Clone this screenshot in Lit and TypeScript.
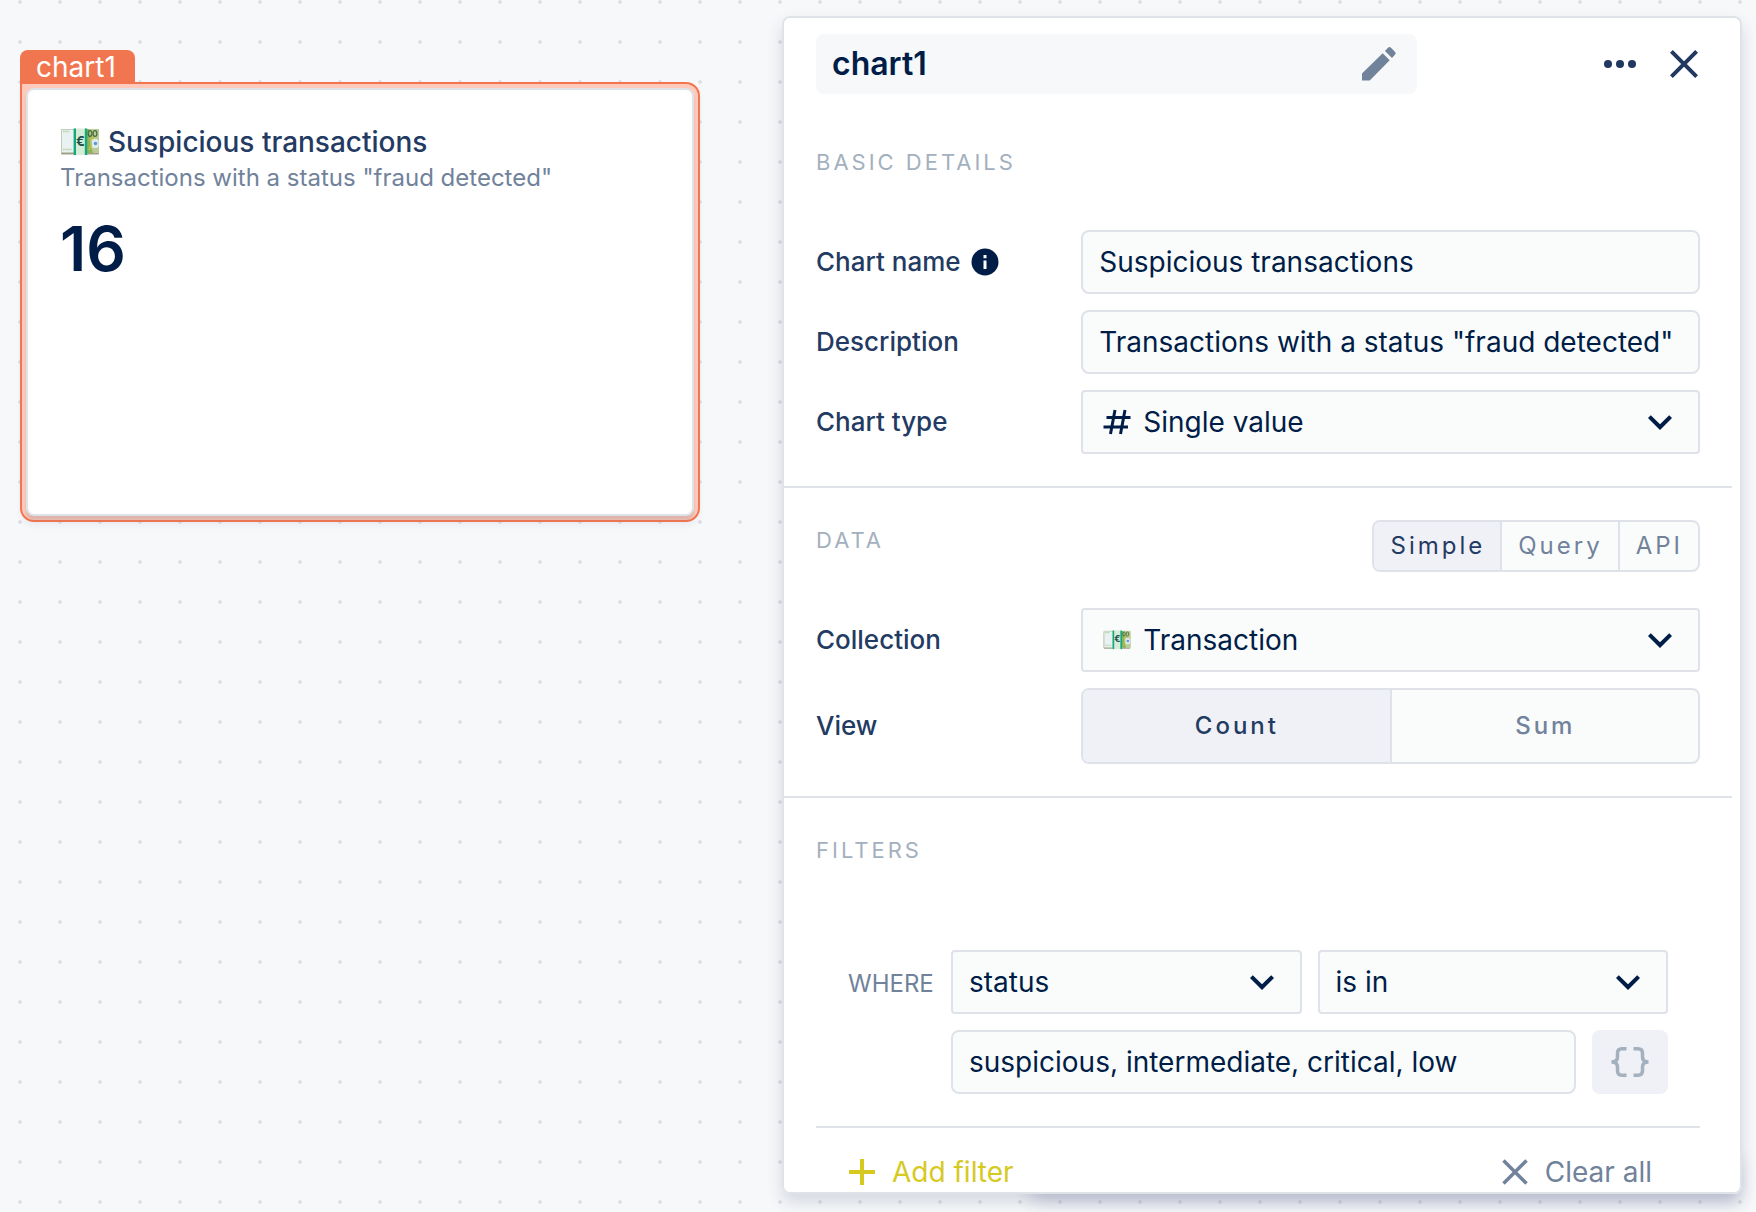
import { LitElement, html, css, svg, nothing, type TemplateResult } from "lit";
import { customElement, property, state } from "lit/decorators.js";
import { classMap } from "lit/directives/class-map.js";

const chevron = html`<svg class="chevron" viewBox="0 0 24 24" aria-hidden="true">
  <path fill="currentColor" d="M16.59 8.59 12 13.17 7.41 8.59 6 10l6 6 6-6z" />
</svg>`;

const banknote = html`<svg class="banknote" viewBox="0 0 40 28" aria-hidden="true">
  <rect x="1" y="3" width="38" height="23.5" rx="1" fill="#a39f8c" />
  <rect x="1" y="1" width="38" height="24" fill="#c6d3aa" />
  <rect x="1.6" y="1.4" width="13" height="23" fill="#eaf1f2" stroke="#bcc8b8" stroke-width="0.8" />
  <path d="M3 3.500h6M3 21.500h9" stroke="#b4d3a4" stroke-width="1.6" stroke-dasharray="1.6 0.6" />
  <path d="M27 1h12v24H27z" fill="#b9cc98" />
  <path d="M27 1h2l2 8-1 7 3 9h-6z" fill="#8fb158" />
  <path d="M29 12l4-3 1 4-3 4-2 5" fill="none" stroke="#c2bd45" stroke-width="1.6" />
  <rect x="32" y="11" width="6.500" height="9" rx="2" fill="#dfebec" />
  <circle cx="35.5" cy="15.5" r="1.800" fill="#5b97dc" />
  <ellipse cx="30" cy="5.500" rx="1.900" ry="2.900" fill="none" stroke="#456b3a" stroke-width="1.200" />
  <ellipse cx="35" cy="5.500" rx="1.900" ry="2.900" fill="none" stroke="#456b3a" stroke-width="1.200" />
  <rect x="14" y="0.500" width="13" height="26.500" fill="#d5ecd9" />
  <rect x="13.600" y="0.500" width="2.400" height="26.500" fill="#12a97c" />
  <rect x="24.800" y="0.500" width="2.400" height="26.500" fill="#12a97c" />
  <text x="20.400" y="17.500" text-anchor="middle" font-family="Inter, sans-serif" font-size="13" font-weight="700" fill="#1c4f48">€</text>
</svg>`;

const hashMark = html`<svg class="hash" viewBox="0 0 28 26" aria-hidden="true">
  <path d="M12 1 7.5 25M22 1l-4.500 24M3.500 8.500H27.500M.500 18H25" fill="none" stroke="currentColor" stroke-width="3" />
</svg>`;

const controls = css`
  * {
    box-sizing: border-box;
  }
  button,
  input,
  select {
    margin: 0;
    font: inherit;
    color: inherit;
  }
  button {
    padding: 0;
    border: 0;
    background: none;
    cursor: pointer;
  }
  svg {
    display: block;
    flex: none;
  }
  .control {
    width: 100%;
    min-width: 0;
    height: 64px;
    padding: 0 16px;
    border: 2px solid #dfe2e8;
    border-radius: 8px;
    background: #fafcfb;
    color: #001d47;
    font-size: 28px;
    line-height: 40px;
  }
`;

/** Drop-down with a chevron and an optional leading icon. */
@customElement("select-box")
export class SelectBox extends LitElement {
  static styles = [
    controls,
    css`
      :host {
        display: grid;
        align-items: center;
        min-width: 0;
        color: #001d47;
      }
      .control,
      .chevron,
      .lead {
        grid-area: 1 / 1;
      }
      .control {
        appearance: none;
        border-radius: 4px;
      }
      .control.with-icon {
        padding-left: 60px;
      }
      .chevron {
        width: 48px;
        height: 48px;
        margin-right: 16px;
        justify-self: end;
        pointer-events: none;
      }
      .lead {
        width: 28px;
        margin-left: 22px;
        pointer-events: none;
      }
      .hash {
        width: 28px;
        height: 26px;
      }
      .banknote {
        width: 28px;
        height: 20px;
      }
    `,
  ];

  @property() label = "";
  @property({ attribute: false }) options: string[] = [];
  @property({ attribute: false }) icon?: TemplateResult;

  render() {
    return html`
      <select class=${classMap({ control: true, "with-icon": !!this.icon })} aria-label=${this.label}>
        ${this.options.map((o) => html`<option>${o}</option>`)}
      </select>
      ${this.icon ? html`<span class="lead">${this.icon}</span>` : nothing} ${chevron}
    `;
  }
}

/** Row of mutually exclusive buttons. */
@customElement("segmented-control")
export class SegmentedControl extends LitElement {
  static styles = [
    controls,
    css`
      :host {
        display: block;
        min-width: 0;
      }
      .group {
        display: flex;
        overflow: hidden;
        border: 2px solid #dfe2e8;
        border-radius: 8px;
        background: #fafcfb;
      }
      .option {
        height: 48px;
        padding: 0 15px 0 16px;
        color: #71829b;
        font-size: 24px;
        line-height: 32px;
        letter-spacing: 3px;
      }
      .option + .option {
        border-left: 2px solid #dfe2e8;
      }
      .option.active {
        background: #f0f1f6;
        color: #233b62;
      }
      .wide .option {
        flex: 1 1 0;
        height: 72px;
        font-weight: 500;
      }
    `,
  ];

  @property() label = "";
  @property({ type: Boolean }) wide = false;
  @property({ attribute: false }) options: string[] = [];
  @state() private selected = 0;

  render() {
    return html`<div class=${classMap({ group: true, wide: this.wide })} role="group" aria-label=${this.label}>
      ${this.options.map(
        (o, i) => html`<button
          type="button"
          class=${classMap({ option: true, active: i === this.selected })}
          aria-pressed=${i === this.selected ? "true" : "false"}
          @click=${() => (this.selected = i)}
        >${o}</button>`,
      )}
    </div>`;
  }
}

/** Selected chart block on the canvas. */
@customElement("chart-card")
export class ChartCard extends LitElement {
  static styles = css`
    :host {
      display: flex;
      flex-direction: column;
      align-items: flex-start;
    }
    .tab {
      padding: 2px 19px 0 16px;
      border-radius: 8px 8px 0 0;
      background: #f1754f;
      color: #fff;
      font-size: 28px;
      line-height: 30px;
    }
    .frame {
      box-sizing: border-box;
      display: flex;
      width: 100%;
      min-height: 440px;
      padding: 4px;
      border: 2px solid #f1754f;
      border-radius: 0 14px 14px 14px;
      background: #fecabb;
      box-shadow: 0 4px 6px rgba(20, 30, 60, 0.05);
    }
    .body {
      flex: 1;
      padding: 32px;
      border: 2px solid #dfe3e8;
      border-radius: 8px;
      background: #fff;
      box-shadow: 0 4px 3px rgba(120, 110, 120, 0.24);
    }
    .title {
      display: flex;
      align-items: center;
      gap: 8px;
      margin: 0;
      color: #233b62;
      font-size: 28px;
      line-height: 40px;
      font-weight: 500;
    }
    .banknote {
      width: 40px;
      height: 28px;
    }
    .subtitle {
      margin: 0;
      color: #71829b;
      font-size: 24px;
      line-height: 32px;
    }
    .value {
      margin: 20px 0 0;
      color: #001d47;
      font-size: 62px;
      line-height: 70px;
      font-weight: 600;
    }
  `;

  render() {
    return html`
      <div class="tab">chart1</div>
      <div class="frame">
        <article class="body">
          <h2 class="title">${banknote}<span>Suspicious transactions</span></h2>
          <p class="subtitle">Transactions with a status "fraud detected"</p>
          <p class="value">16</p>
        </article>
      </div>
    `;
  }
}

/** Settings of the selected chart. */
@customElement("settings-panel")
export class SettingsPanel extends LitElement {
  static styles = [
    controls,
    css`
      :host {
        position: relative;
        display: flex;
        min-width: 0;
        min-height: 0;
        isolation: isolate;
        border-radius: 8px;
        box-shadow: 0 8px 16px rgba(30, 50, 90, 0.16);
      }
      /* deeper shadow cast below the right part of the panel */
      :host::after {
        content: "";
        position: absolute;
        z-index: -1;
        left: 26%;
        right: 4px;
        bottom: 0;
        height: 40px;
        box-shadow: 0 6px 18px rgba(60, 60, 120, 0.24);
      }
      .scroller {
        flex: 1;
        min-width: 0;
        padding-right: 8px;
        overflow-y: auto;
        scrollbar-width: none;
        border: 2px solid #dfe3e8;
        border-radius: 8px;
        background: #fff;
      }
      .header {
        display: flex;
        align-items: center;
        padding: 16px 32px;
        color: #213860;
      }
      .name {
        display: flex;
        align-items: center;
        flex: 0 0 68%;
        height: 60px;
        padding: 0 20px 0 16px;
        border-radius: 8px;
        background: #f7f8fa;
      }
      .name-input {
        flex: 1;
        min-width: 0;
        padding: 0;
        border: 0;
        background: none;
        color: #001d47;
        font-size: 32px;
        line-height: 40px;
        font-weight: 600;
      }
      .pencil {
        width: 36px;
        height: 36px;
        color: #71829b;
      }
      .more {
        width: 32px;
        height: 32px;
        margin-left: auto;
      }
      .close {
        width: 32px;
        height: 32px;
        margin-left: 32px;
      }
      .section {
        padding: 32px;
        border-bottom: 2px solid #dfe2e8;
      }
      .section.last {
        border-bottom: 0;
      }
      .section-head {
        display: flex;
        align-items: flex-start;
        justify-content: space-between;
        height: 52px;
        margin-bottom: 36px;
      }
      .section-title {
        margin: 0;
        color: #a3b0be;
        font-size: 22px;
        line-height: 40px;
        font-weight: 400;
        letter-spacing: 3px;
      }
      .rows {
        display: grid;
        grid-template-columns: 3fr 7fr;
        align-items: center;
        row-gap: 16px;
      }
      .label {
        display: flex;
        align-items: center;
        gap: 10px;
        color: #233b62;
        font-size: 26px;
        line-height: 32px;
        font-weight: 500;
      }
      .info {
        width: 28px;
        height: 28px;
      }
      .filter {
        display: grid;
        grid-template-columns: 103px minmax(0, 1fr);
        align-items: center;
        row-gap: 16px;
        padding: 32px;
        border-bottom: 2px solid #dfe3e8;
      }
      .where {
        padding-top: 4px;
        color: #71829b;
        font-size: 24px;
        line-height: 32px;
      }
      .pair {
        display: grid;
        grid-template-columns: 1fr 1fr;
        gap: 16px;
      }
      .value-row {
        grid-column: 2;
        display: flex;
        gap: 16px;
      }
      .braces {
        display: flex;
        align-items: center;
        justify-content: center;
        flex: 0 0 76px;
        height: 64px;
        border-radius: 8px;
        background: #f0f1f6;
        color: #a3b0be;
      }
      .braces-icon {
        width: 40px;
        height: 32px;
      }
      .actions {
        display: flex;
        justify-content: space-between;
        padding: 24px 48px 0 32px;
      }
      .action {
        display: flex;
        align-items: center;
        gap: 16px;
        color: #71829b;
        font-size: 28px;
        line-height: 40px;
      }
      .action.add {
        color: #d6c91f;
      }
      .action-icon {
        width: 28px;
        height: 28px;
      }
    `,
  ];

  render() {
    return html`
      <div class="scroller">
        <header class="header">
          <div class="name">
            <input class="name-input" aria-label="Block name" .value=${"chart1"} />
            <button type="button" aria-label="Rename">
              <svg class="pencil" viewBox="0 0 36 36" aria-hidden="true">
                <path
                  fill="currentColor"
                  d="M1 27.500 21.700 7.200l7 7L8.700 34.500H1zM24 5l3.200-3.400q1.300-1.200 2.600 0l4.300 4.300q1.300 1.300 0 2.700L31 12z"
                />
              </svg>
            </button>
          </div>
          <button type="button" class="more" aria-label="More actions">
            <svg viewBox="0 0 32 32" aria-hidden="true">
              ${[4, 16, 28].map((x) => svg`<circle cx=${x} cy="16" r="4" fill="currentColor" />`)}
            </svg>
          </button>
          <button type="button" class="close" aria-label="Close">
            <svg viewBox="4 4 16 16" aria-hidden="true">
              <path
                fill="currentColor"
                d="M19 6.410 17.590 5 12 10.590 6.410 5 5 6.410 10.590 12 5 17.590 6.410 19 12 13.410 17.590 19 19 17.590 13.410 12z"
              />
            </svg>
          </button>
        </header>

        <section class="section">
          <div class="section-head"><h3 class="section-title">BASIC DETAILS</h3></div>
          <div class="rows">
            <label class="label" for="chart-name"
              >Chart name
              <svg class="info" viewBox="0 0 28 28" aria-hidden="true">
                <circle cx="14" cy="14" r="13.500" fill="#001d47" />
                <path d="M14 12.500V21M14 7v3.200" stroke="#fff" stroke-width="3" />
              </svg>
            </label>
            <input class="control" id="chart-name" .value=${"Suspicious transactions"} />
            <label class="label" for="description">Description</label>
            <input class="control" id="description" .value=${'Transactions with a status "fraud detected"'} />
            <span class="label">Chart type</span>
            <select-box label="Chart type" .options=${["Single value"]} .icon=${hashMark}></select-box>
          </div>
        </section>

        <section class="section">
          <div class="section-head">
            <h3 class="section-title">DATA</h3>
            <segmented-control label="Data source" .options=${["Simple", "Query", "API"]}></segmented-control>
          </div>
          <div class="rows">
            <span class="label">Collection</span>
            <select-box label="Collection" .options=${["Transaction"]} .icon=${banknote}></select-box>
            <span class="label">View</span>
            <segmented-control wide label="View" .options=${["Count", "Sum"]}></segmented-control>
          </div>
        </section>

        <section class="section last">
          <div class="section-head"><h3 class="section-title">FILTERS</h3></div>
          <div class="filter">
            <span class="where">WHERE</span>
            <div class="pair">
              <select-box label="Field" .options=${["status"]}></select-box>
              <select-box label="Operator" .options=${["is in"]}></select-box>
            </div>
            <div class="value-row">
              <input class="control" aria-label="Values" .value=${"suspicious, intermediate, critical, low"} />
              <button type="button" class="braces" aria-label="Insert variable">
                <svg class="braces-icon" viewBox="0 0 40 32" fill="none" stroke="currentColor" stroke-width="3.500" aria-hidden="true">
                  <path d="M16.500 2.800H12Q7.500 2.800 7.500 7.300V11Q7.500 16 1.500 16 7.500 16 7.500 21V24.700Q7.500 29.200 12 29.200H16.500" />
                  <path d="M23.500 2.800H28Q32.500 2.800 32.500 7.300V11Q32.500 16 38.500 16 32.500 16 32.500 21V24.700Q32.500 29.200 28 29.200H23.500" />
                </svg>
              </button>
            </div>
          </div>
          <div class="actions">
            <button type="button" class="action add">
              <svg class="action-icon" viewBox="0 0 28 28" aria-hidden="true">
                <path d="M14 1v26M1 14h26" stroke="currentColor" stroke-width="4" />
              </svg>
              Add filter
            </button>
            <button type="button" class="action">
              <svg class="action-icon" viewBox="0 0 28 28" aria-hidden="true">
                <path d="M2.500 2.500l23 23M25.500 2.500l-23 23" stroke="currentColor" stroke-width="3.500" />
              </svg>
              Clear all
            </button>
          </div>
        </section>
      </div>
    `;
  }
}

@customElement("app-root")
export class AppRoot extends LitElement {
  static styles = css`
    :host {
      box-sizing: border-box;
      display: grid;
      grid-template-columns: minmax(0, 17fr) minmax(0, 24fr);
      grid-template-rows: minmax(0, 1fr);
      column-gap: 82px;
      height: 100vh;
      padding: 16px 14px 18px 20px;
      background: radial-gradient(circle, #dfe1e7 1px, #dfe1e7 2px, transparent 2px) 0 -18px / 40px 40px #f7f8fa;
      font-family: Inter, "Liberation Sans", sans-serif;
    }
    .canvas {
      padding-top: 34px;
    }
  `;

  render() {
    return html`
      <main class="canvas"><chart-card></chart-card></main>
      <settings-panel></settings-panel>
    `;
  }
}
